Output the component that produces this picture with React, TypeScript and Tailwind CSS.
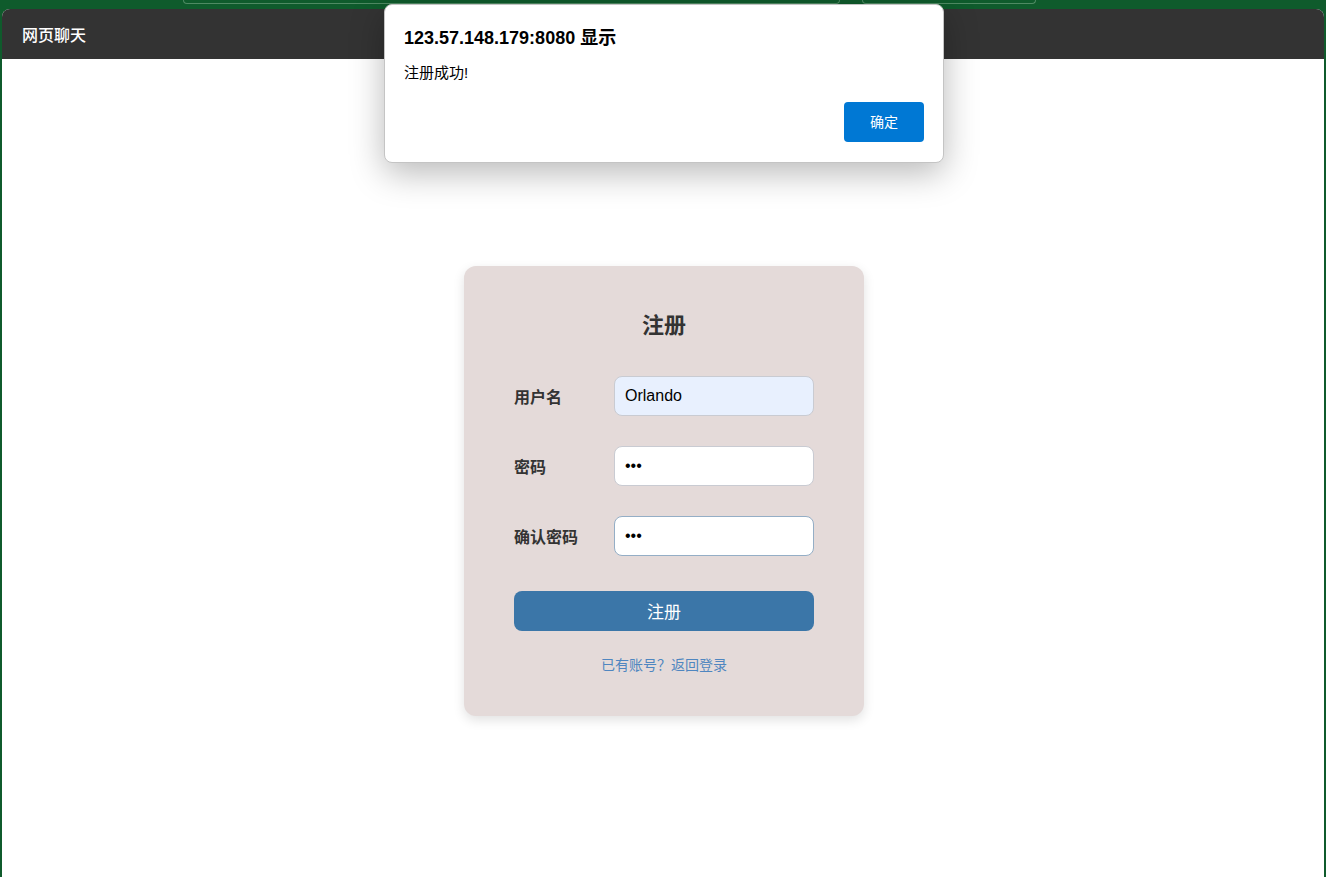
import React from 'react';

const cjk = "font-['Liberation_Sans','Noto_Sans_CJK_SC',sans-serif]";

const Field = ({ label, value, type, tone }: { label: string; value: string; type: string; tone: string }) => (
  <div className="flex items-center h-[40px]">
    <label className="w-[100px] pt-[3px] text-[16px] font-bold text-[#333]">{label}</label>
    <input
      readOnly
      type={type}
      value={value}
      className={`w-[200px] h-[40px] rounded-[8px] border px-[10px] text-[16px] text-black outline-none ${tone}`}
    />
  </div>
);

const App = () => {
  return (
    <div className={`relative h-[877px] w-full bg-[#0f5b2c] flex flex-col overflow-hidden ${cjk}`}>
      {/* browser tab strip edges */}
      <div className="h-[9px] flex items-start">
        <div className="ml-[183px] w-[657px] h-[4px] border border-t-0 border-[#4f8a63] rounded-b-[10px]" />
        <div className="ml-[22px] w-[174px] h-[4px] border border-t-0 border-[#4f8a63] rounded-b-[10px]" />
      </div>

      <div className="flex-1 mx-[2px] rounded-t-[8px] overflow-hidden bg-white flex flex-col">
        <header className="h-[50px] bg-[#333333] flex items-center px-[20px] pt-[3px]">
          <span className="text-white text-[16px] font-medium">网页聊天</span>
        </header>

        <main className="flex-1 flex justify-center pt-[207px] pl-[2px]">
          <div className="w-[400px] h-[450px] bg-[#e4dad9] rounded-[12px] shadow-[0_4px_12px_rgba(0,0,0,0.12)] px-[50px] pt-[43px] flex flex-col">
            <h2 className="text-center text-[22px] leading-[33px] font-bold text-[#333] mb-[34px]">注册</h2>
            <div className="flex flex-col gap-[30px]">
              <Field label="用户名" value="Orlando" type="text" tone="bg-[#e8f0fe] border-[#c9cbd2]" />
              <Field label="密码" value="abc" type="password" tone="bg-white border-[#c9cbd2]" />
              <Field label="确认密码" value="abc" type="password" tone="bg-white border-[#94aec6]" />
            </div>
            <button className="mt-[35px] h-[40px] w-full rounded-[8px] bg-[#3b76a8] text-white text-[17px] pt-[3px]">注册</button>
            <div className="mt-[24px] text-center text-[14px] leading-[20px] text-[#4f86c0]">已有账号？返回登录</div>
          </div>
        </main>
      </div>

      {/* alert dialog overlay */}
      <div className="absolute left-[384px] top-[4px] w-[560px] h-[159px] bg-white rounded-[8px] border border-[#c4c4c4] shadow-[0_10px_34px_rgba(0,0,0,0.28)] px-[19px] pt-[22px]">
        <div className="text-[18px] font-bold text-black leading-[22px]">123.57.148.179:8080 显示</div>
        <div className="mt-[14px] text-[15px] text-black leading-[20px]">注册成功!</div>
        <div className="flex justify-end mt-[19px]">
          <button className="w-[80px] h-[40px] rounded-[4px] bg-[#0078d4] text-white text-[14px]">确定</button>
        </div>
      </div>
    </div>
  );
};

export default App;
